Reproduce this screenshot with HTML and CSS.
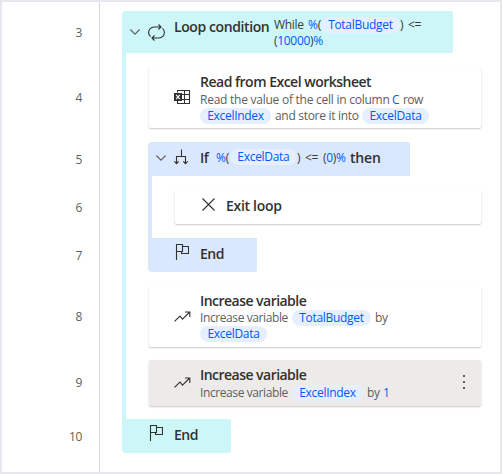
FILE: index.html
```
<!DOCTYPE html>
<html lang="en">
<head>
<meta charset="utf-8">
<title>Flow editor</title>
<link rel="stylesheet" href="styles.css">
</head>
<body>
<svg class="symbols" width="0" height="0">
  <symbol id="chevron" viewBox="0 0 10 6"><path d="M.4 .5L5 5.1L9.6 .5"/></symbol>
  <symbol id="flag" viewBox="0 0 14 17"><path d="M1.5 16V.5H7.5V7.5H1.5M7.5 2.5H13.5V9.5H6.5V7.5"/></symbol>
  <symbol id="trend" viewBox="0 0 17 11"><path d="M.5 10.3L6 5L8.5 8.2L15.7 1M11 1H15.8V6"/></symbol>
</svg>
<main class="editor">
  <div class="gutter">
    <span class="num n3">3</span><span class="num n4">4</span><span class="num">5</span><span class="num">6</span><span class="num">7</span><span class="num n8">8</span><span class="num n9">9</span><span class="num">10</span>
  </div>
  <div class="flow">
    <section class="loop">
      <header class="loop-head">
        <svg class="chevron"><use href="#chevron"/></svg>
        <svg class="icon loop-icon" viewBox="0 0 17 17"><path d="M2.6 12.6A5 5 0 0 1 .6 8.5A5.5 5.5 0 0 1 6 3H13M10.5 .5L13 3L10.5 5.5M14.4 4.4A5 5 0 0 1 16.4 8.5A5.5 5.5 0 0 1 11 14H4M6.5 11.5L4 14L6.5 16.5"/></svg>
        <h3 class="title t-loop">Loop condition</h3>
        <p class="text dark"><span class="w-while">While</span><b>%</b>(<span class="chip c-total loop-chip">TotalBudget</span><span class="op">) &lt;=</span><br>(<b>10000</b>)<b>%</b></p>
      </header>
      <div class="loop-body">
        <article class="card read">
          <svg class="icon excel" viewBox="0 0 17 15"><path d="M3.5 3.5V1.5H15.5V14.5H3.5V12M8 5.5H15.5M8 10.5H15.5M10.5 1.5V14.5"/><path class="solid" d="M0 4H8V12H0Z"/><path class="cut" d="M2.2 5.8L5.8 10.2M5.8 5.8L2.2 10.2"/></svg>
          <div>
            <h3 class="title t-read">Read from Excel worksheet</h3>
            <p class="text read-text"><span class="w-read">Read the value of the cell in column</span><b class="w-c">C</b><span class="w-row">row</span><br><span class="chip c-index">ExcelIndex</span><span class="w-store">and store it into</span><span class="chip c-data">ExcelData</span></p>
          </div>
        </article>
        <section class="cond">
          <header class="cond-head">
            <svg class="chevron"><use href="#chevron"/></svg>
            <svg class="icon branch" viewBox="0 0 14 16"><path d="M7.5 .5V7.5M2.5 14.5V7.5H11.5V14.5M.3 12.3L2.5 14.7L4.7 12.3M9.3 12.3L11.5 14.7L13.7 12.3"/></svg>
            <h3 class="title t-if">If</h3>
            <p class="text dark if-text"><b>%</b>(<span class="chip c-data if-chip">ExcelData</span><span class="op if-op">) &lt;=</span>(<b>0</b>)<b>%</b></p>
            <h3 class="title t-then">then</h3>
          </header>
          <div class="cond-body">
            <article class="card exit">
              <svg class="icon cross" viewBox="0 0 13 13"><path d="M.5 .5L12.5 12.5M12.5 .5L.5 12.5"/></svg>
              <h3 class="title t-exit">Exit loop</h3>
            </article>
          </div>
          <footer class="end">
            <svg class="icon flag"><use href="#flag"/></svg>
            <h3 class="title t-end">End</h3>
          </footer>
        </section>
        <article class="card inc-a">
          <svg class="icon trend"><use href="#trend"/></svg>
          <div>
            <h3 class="title t-inc">Increase variable</h3>
            <p class="text inc-text"><span class="w-inc">Increase variable</span><span class="chip c-total">TotalBudget</span><span class="w-by">by</span><br><span class="chip c-data">ExcelData</span></p>
          </div>
        </article>
        <article class="card inc-b">
          <svg class="icon trend"><use href="#trend"/></svg>
          <div>
            <h3 class="title t-inc">Increase variable</h3>
            <p class="text inc-text"><span class="w-inc">Increase variable</span><span class="chip c-index">ExcelIndex</span><span class="w-by">by</span><b>1</b></p>
          </div>
          <svg class="more" viewBox="0 0 2 14"><path d="M0 0H2V2H0ZM0 6H2V8H0ZM0 12H2V14H0Z"/></svg>
        </article>
      </div>
      <footer class="end loop-end">
        <svg class="icon flag"><use href="#flag"/></svg>
        <h3 class="title t-end">End</h3>
      </footer>
    </section>
  </div>
</main>
</body>
</html>
```
FILE: styles.css
```
* { box-sizing: border-box; }
body { margin: 0; background: #fff; font-family: "Open Sans", "Noto Sans", sans-serif; color: #323130; }
h3, p { margin: 0; }
.symbols { position: absolute; }
.editor { display: flex; width: 502px; height: 474px; border: 2px solid #e5e9ed; }
.gutter { width: 98px; flex: none; border-right: 1px solid #d9dadc; padding: 9px 17px 0 0; display: flex; flex-direction: column; align-items: flex-end; gap: 14px; }
.num { height: 34px; display: flex; align-items: center; font-size: 12px; letter-spacing: -.4px; color: #605e5c; }
.n3 { height: 42px; margin-bottom: -2px; }
.n4 { height: 64px; margin-bottom: -1px; }
.n8 { height: 60px; margin-bottom: -1px; }
.n9 { height: 46px; }
.flow { padding: 9px 0 0 22px; }
.icon, .chevron { flex: none; fill: none; stroke: #323130; stroke-width: 1.1; }
.chevron { width: 10px; height: 6px; stroke: #605e5c; }
.title { font-size: 14px; line-height: 16px; font-weight: 600; letter-spacing: -.5px; white-space: nowrap; }
.text { font-size: 12px; line-height: 16px; letter-spacing: -.3px; color: #605e5c; white-space: nowrap; }
.text b { font-weight: 400; color: #0059ff; }
.text span { display: inline-block; }
.dark { color: #3b3a39; }
.text .chip { height: 16px; line-height: 16px; border-radius: 8px; background: #e5efff; color: #0059ff; text-align: center; vertical-align: top; }
.c-total { width: 79px; }
.c-index { width: 71px; }
.c-data { width: 67px; }
.op { word-spacing: 2px; }
.loop { width: 359px; border-left: 4px solid #cdf6f8; border-radius: 4px; }
.loop-head { width: 327px; height: 42px; background: #cdf6f8; border-top-right-radius: 2px; display: flex; padding: 6px 0 0 4px; }
.loop-head .chevron { margin-top: 12px; }
.loop-icon { width: 17px; height: 17px; margin: 7px 9px 0 8px; }
.title.t-loop { width: 100px; margin-top: 2px; letter-spacing: -.4px; }
.w-while { width: 34px; }
.loop-body { padding: 13px 0 13px 23px; }
.card { display: flex; background: #fff; border-radius: 2px; box-shadow: 0 1px 2px rgba(0,0,0,.22); }
.read { height: 62px; padding: 8px 0 0 25px; }
.excel { width: 17px; height: 15px; margin: 15px 9px 0 0; }
.solid { fill: #323130; stroke: none; }
.cut { stroke: #fff; }
.title.t-read { letter-spacing: -.5px; }
.read-text { margin-top: 2px; }
.w-read { width: 192px; letter-spacing: -.25px; }
.w-c { display: inline-block; width: 11px; }
.w-row { letter-spacing: -.6px; }
.w-store { width: 91px; padding-left: 4px; }
.cond { width: 333px; margin: 14px 0 15px -1px; border-left: 4px solid #dae8fe; border-radius: 4px; }
.cond-head { width: 258px; height: 34px; background: #dae8fe; border-top-right-radius: 2px; display: flex; padding: 7px 0 0 4px; }
.cond-head .chevron { margin-top: 6px; }
.branch { width: 14px; height: 16px; margin: 0 12px 0 8px; }
.cond-head .title { margin-top: 1px; }
.t-if { width: 16px; }
.if-text { width: 134px; line-height: 18px; }
.text .if-chip { margin-left: 1px; }
.if-op { width: 26px; }
.title.t-then { letter-spacing: -.2px; }
.cond-body { padding: 14px 0 14px 23px; }
.exit { height: 34px; padding: 8px 0 0 27px; }
.cross { width: 13px; height: 13px; margin-right: 11px; }
.title.t-exit { letter-spacing: -.3px; }
.end { width: 105px; height: 34px; background: #dae8fe; border-bottom-right-radius: 2px; display: flex; padding: 8px 0 0 23px; }
.flag { width: 14px; height: 17px; margin: -2px 11px 0 0; }
.loop-end { background: #cdf6f8; }
.inc-a { height: 60px; padding: 6px 0 0 25px; margin-bottom: 13px; }
.trend { width: 17px; height: 11px; margin: 18px 9px 0 0; }
.inc-b { height: 46px; padding: 7px 0 0 25px; background: #edebe9; }
.inc-b .trend { margin-top: 10px; }
.inc-text { margin-top: 1px; }
.inc-b .inc-text { margin-top: 2px; }
.title.t-inc { letter-spacing: -.53px; }
.w-inc { width: 92px; letter-spacing: -.4px; }
.w-by { width: 20px; padding-left: 4px; }
.more { width: 2px; height: 14px; margin: 8px 16px 0 auto; fill: #605e5c; }
```
